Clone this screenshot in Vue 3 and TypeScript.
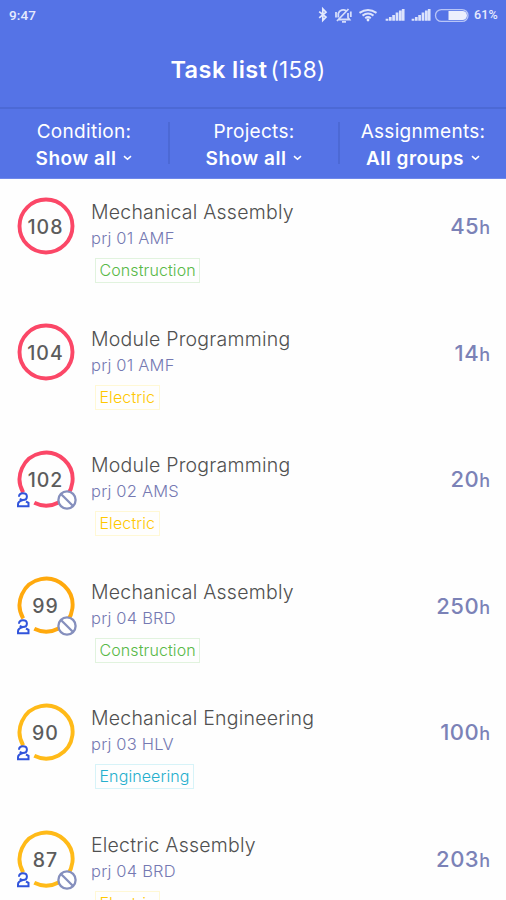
<script setup lang="ts">
interface Filter { label: string; value: string; kind: string }
interface Task {
  score: number
  ring: string
  title: string
  project: string
  tag: string
  hours: number
  person: boolean
  blocked: boolean
}

const filters: Filter[] = [
  { label: 'Condition:', value: 'Show all', kind: 'condition' },
  { label: 'Projects:', value: 'Show all', kind: 'projects' },
  { label: 'Assignments:', value: 'All groups', kind: 'assignments' },
]

const tasks: Task[] = [
  { score: 108, ring: 'red', title: 'Mechanical Assembly', project: 'prj 01 AMF', tag: 'Construction', hours: 45, person: false, blocked: false },
  { score: 104, ring: 'red', title: 'Module Programming', project: 'prj 01 AMF', tag: 'Electric', hours: 14, person: false, blocked: false },
  { score: 102, ring: 'red', title: 'Module Programming', project: 'prj 02 AMS', tag: 'Electric', hours: 20, person: true, blocked: true },
  { score: 99, ring: 'orange', title: 'Mechanical Assembly', project: 'prj 04 BRD', tag: 'Construction', hours: 250, person: true, blocked: true },
  { score: 90, ring: 'amber', title: 'Mechanical Engineering', project: 'prj 03 HLV', tag: 'Engineering', hours: 100, person: true, blocked: false },
  { score: 87, ring: 'amber', title: 'Electric Assembly', project: 'prj 04 BRD', tag: 'Electric', hours: 203, person: true, blocked: true },
]
</script>

<template>
  <main class="screen">
    <header class="header">
      <div class="status">
        <span class="clock">9:47</span>
        <svg class="status-icons" viewBox="0 0 156 20" fill="none">
          <path d="M1.2 6.6 8 12.1 4.8 15.4V3.8L8 7.2 1.2 12.8" stroke="#e4e9fd" stroke-width="1.7" />
          <g stroke="#d5ddfb" stroke-width="1.8">
            <path d="M20.3 12.5V8.5a5 5 0 0 1 8-2.500M30 8v4.500l1.500 2H21M24 16.800h4" />
            <path d="M19 16 30.500 4M18 7v5.500M32.800 6.500V12" />
          </g>
          <g stroke="#dce3fc" stroke-width="2">
            <path d="M41.500 7.800q8.500-5.600 17 0M44.500 10.600q5.500-4 11 0M47.200 13.200q2.800-2.200 5.600 0" />
          </g>
          <circle cx="50" cy="15" r="1.4" fill="#e8edff" />
          <path d="M69 15.800v-2M72.300 15.800v-3.700M75.600 15.800v-5.900M79 15.800V7.600M82.300 15.800V5.600M85.200 15.800V4M95 15.800v-2M98.300 15.800v-3.700M101.600 15.800v-5.900M105 15.800V7.600M108.300 15.800V5.600M111.200 15.800V4" stroke="#dce3fc" stroke-width="2.7" />
          <rect x="117.500" y="4.600" width="32.500" height="11.800" rx="5.900" stroke="#b8c5f7" stroke-width="1.300" />
          <path d="M130.500 6h14a4.500 4.500 0 0 1 0 9h-14z" fill="#eceffd" />
        </svg>
        <span class="battery">61%</span>
      </div>
      <h1 class="heading"><span class="name">Task list</span><span class="count">(158)</span></h1>
    </header>

    <nav class="filters">
      <div v-for="f in filters" :key="f.kind" class="filter" :class="f.kind">
        <span class="label">{{ f.label }}</span>
        <span class="choice">
          <span class="value">{{ f.value }}</span>
          <svg class="chevron" viewBox="0 0 9 6" fill="none"><path d="M1 1.200 4.500 4.300 8 1.200" stroke="#fff" stroke-width="1.600" /></svg>
        </span>
      </div>
    </nav>

    <section class="list">
      <article v-for="t in tasks" :key="t.score" class="task">
        <div class="badge">
          <svg class="ring" :class="t.ring" viewBox="0 0 60 60" fill="none">
            <circle v-if="!t.person" cx="30" cy="30" r="26.500" />
            <path v-else d="M7.200 43.400A26.500 26.500 0 1 1 18.300 53.800" />
          </svg>
          <span class="score">{{ t.score }}</span>
          <svg v-if="t.person" class="person" viewBox="0 0 14 16" fill="none">
            <path d="M3 4.800C3 2.200 4.600 1.200 6.900 1.200s4 1.200 4 3.400c0 2.100-1.600 3.500-4 3.500-1.300 0-2.300-.5-3-1.400M6.500 8.300C3.500 9 2 10.700 2 12.500v1.700h10.500v-3.400L10 9.500" />
          </svg>
          <svg v-if="t.blocked" class="blocked" viewBox="0 0 20 20">
            <circle cx="10" cy="10" r="8.600" /><path d="m4.200 4.200 11.600 11.600" />
          </svg>
        </div>
        <div class="info">
          <h2 class="title">{{ t.title }}</h2>
          <p class="project">{{ t.project }}</p>
          <span class="tag" :class="t.tag.toLowerCase()">{{ t.tag }}</span>
        </div>
        <div class="hours">{{ t.hours }}<span class="unit">h</span></div>
      </article>
    </section>
  </main>
</template>

<style>
body { margin: 0; background: #fefefe; }
</style>

<style scoped>
.screen { width: 506px; height: 900px; overflow: hidden; background: #fefefe; font-family: Inter, "Liberation Sans", sans-serif; }
.header { height: 107px; background: #5573e6; color: #fff; }
.status { height: 30px; box-sizing: border-box; padding: 0 7px 0 9px; display: flex; align-items: center; color: #e6ebfd; }
.clock { font: 500 13.5px/30px Roboto, sans-serif; letter-spacing: .1px; }
.status-icons { width: 156px; height: 20px; margin-left: auto; margin-bottom: 1px; }
.battery { font: 500 12.5px/30px Roboto, sans-serif; width: 25px; letter-spacing: .2px; }
.heading { margin: 21px 0 0; display: flex; justify-content: center; gap: 3px; padding-right: 10px; font-size: 23.5px; line-height: 37px; }
.name { font-weight: 600; letter-spacing: .45px; }
.count { font-weight: 400; font-size: 22.5px; letter-spacing: .4px; }
.filters { height: 72px; box-sizing: border-box; border-top: 2px solid #4c69d5; border-bottom: 1px solid #6f88ea; background: #5573e6; color: #fff; display: grid; grid-template-columns: 168px 170px 168px; }
.filter { height: 42px; margin-top: 13px; display: flex; flex-direction: column; align-items: center; font-size: 19px; }
.filter + .filter { border-left: 2px solid #4c69d5; }
.label { line-height: 20px; letter-spacing: .3px; white-space: nowrap; }
.choice { display: flex; align-items: center; gap: 7px; line-height: 34px; font-weight: 600; letter-spacing: .5px; white-space: nowrap; }
.value { font-size: 19px; }
.chevron { width: 9px; height: 6px; margin-top: -3px; }
.task { height: 126.6px; box-sizing: border-box; padding: 17px 16px 0 15.5px; display: flex; align-items: flex-start; }
.badge { position: relative; width: 60px; height: 60px; margin-top: -.4px; flex: none; display: flex; align-items: center; justify-content: center; }
.ring { position: absolute; inset: 0; width: 60px; height: 60px; stroke-width: 3.9; }
.red { stroke: #fb4767; }
.orange { stroke: #ffa90d; }
.amber { stroke: #ffba18; }
.score { font-size: 19.5px; font-weight: 500; color: #5c5c5c; letter-spacing: 1px; padding: 2px 0 0 0; }
.person { position: absolute; left: 0; top: 43.5px; width: 14px; height: 16px; stroke: #3154db; stroke-width: 2; }
.blocked { position: absolute; left: 41.5px; top: 41px; width: 20px; height: 20px; fill: #fff; stroke: #858fbd; stroke-width: 2.3; }
.info { margin-left: 15.5px; }
.title { margin: 0; font-size: 19.5px; font-weight: 300; line-height: 32px; color: #505050; letter-spacing: .22px; }
.project { margin: 0; font-size: 16.5px; font-weight: 300; line-height: 21px; color: #7579b2; letter-spacing: .2px; }
.tag { display: block; width: max-content; box-sizing: border-box; height: 25px; margin: 9px 0 0 4px; padding: 0 3.5px; border: 1px solid; font-size: 16px; font-weight: 300; line-height: 23px; letter-spacing: .1px; }
.construction { color: #58b947; border-color: #e1f3de; }
.electric { color: #ffc800; border-color: #fff8d5; }
.engineering { color: #25afcd; border-color: #d7f3f8; }
.hours { margin-left: auto; font-size: 22px; font-weight: 500; line-height: 61px; color: #7b82b7; letter-spacing: .5px; }
.unit { font-size: 18px; letter-spacing: 0; }
</style>
